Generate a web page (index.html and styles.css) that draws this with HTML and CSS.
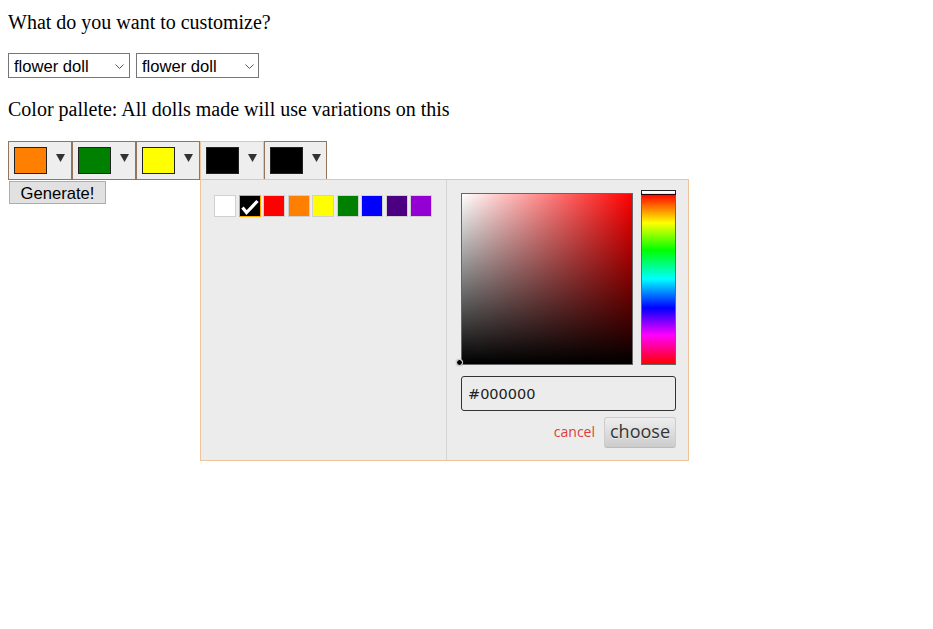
FILE: index.html
```html
<!DOCTYPE html>
<html>
<head>
<meta charset="utf-8">
<title>Customize</title>
<link rel="stylesheet" href="styles.css">
</head>
<body>
<p class="line first">What do you want to customize?</p>
<div class="selects">
  <div class="select w122"><span>flower doll</span><svg class="chev" width="9" height="5" viewBox="0 0 9 5"><polyline points="0.5,0.5 4.5,4.5 8.5,0.5" fill="none" stroke="#555" stroke-width="1"/></svg></div>
  <div class="select w123"><span>flower doll</span><svg class="chev" width="9" height="5" viewBox="0 0 9 5"><polyline points="0.5,0.5 4.5,4.5 8.5,0.5" fill="none" stroke="#555" stroke-width="1"/></svg></div>
</div>
<p class="line second">Color pallete: All dolls made will use variations on this</p>
<div class="replacers">
  <div class="replacer"><div class="preview c-orange"></div><svg class="dd" width="9" height="8" viewBox="0 0 9 8"><polygon points="0,0 9,0 4.5,8" fill="#333"/></svg></div>
  <div class="replacer"><div class="preview c-green"></div><svg class="dd" width="9" height="8" viewBox="0 0 9 8"><polygon points="0,0 9,0 4.5,8" fill="#333"/></svg></div>
  <div class="replacer"><div class="preview c-yellow"></div><svg class="dd" width="9" height="8" viewBox="0 0 9 8"><polygon points="0,0 9,0 4.5,8" fill="#333"/></svg></div>
  <div class="replacer active"><div class="preview c-black"></div><svg class="dd" width="9" height="8" viewBox="0 0 9 8"><polygon points="0,0 9,0 4.5,8" fill="#333"/></svg></div>
  <div class="replacer last"><div class="preview c-black"></div><svg class="dd" width="9" height="8" viewBox="0 0 9 8"><polygon points="0,0 9,0 4.5,8" fill="#333"/></svg></div>
</div>
<button class="generate">Generate!</button>

<div class="popup">
  <div class="palette">
    <div class="thumb c-white"></div>
    <div class="thumb c-black selected"><svg width="20" height="20" viewBox="0 0 20 20"><polyline points="2.5,11.5 6.5,16.5 17.5,5" fill="none" stroke="#fff" stroke-width="3.2" stroke-linejoin="miter" stroke-linecap="butt"/></svg></div>
    <div class="thumb c-red"></div>
    <div class="thumb c-orange"></div>
    <div class="thumb c-yellow"></div>
    <div class="thumb c-green"></div>
    <div class="thumb c-blue"></div>
    <div class="thumb c-indigo"></div>
    <div class="thumb c-violet"></div>
  </div>
  <div class="picker">
    <div class="pick-row">
      <div class="sv"><div class="dragger"></div></div>
      <div class="hue"><div class="slider"></div></div>
    </div>
    <div class="input">#000000</div>
    <div class="actions">
      <span class="cancel">cancel</span>
      <button class="choose">choose</button>
    </div>
  </div>
</div>
</body>
</html>
```
FILE: styles.css
```css
html, body {
  background: #fff;
}
body {
  margin: 8px;
  font-family: "Liberation Serif", "Times New Roman", serif;
  font-size: 20px;
  color: #000;
}
.line {
  margin: 0;
  line-height: 23px;
  height: 23px;
}
.first {
  margin-top: 3px;
}
.second {
  margin-top: 20px;
}
.selects {
  display: flex;
  gap: 6px;
  margin-top: 19px;
}
.select {
  box-sizing: border-box;
  height: 25px;
  border: 1px solid #767676;
  background: #fff;
  display: flex;
  align-items: center;
  justify-content: space-between;
  padding: 0 5px 0 5px;
  font-family: "Liberation Sans", Arial, sans-serif;
  font-size: 16.6px;
  color: #000;
}
.select span {
  line-height: 19px;
  margin-top: 2px;
}
.w122 { width: 122px; }
.w123 { width: 123px; padding-right: 4px; }
.chev {
  display: block;
  margin-top: 1px;
}
.replacers {
  display: flex;
  margin-top: 20px;
}
.replacer {
  box-sizing: border-box;
  width: 64px;
  height: 39px;
  border: 1px solid #91765d;
  background: #eee;
  padding: 5px;
  display: flex;
  align-items: flex-start;
}
.replacer.active {
  border-color: #f0c49b;
}
.replacer.last {
  width: 63px;
}
.preview {
  box-sizing: border-box;
  width: 33px;
  height: 27px;
  border: 1px solid #222;
}
.dd {
  display: block;
  margin-left: 9px;
  margin-top: 7px;
}
.c-orange { background: #ff8000; }
.c-green { background: #008000; }
.c-yellow { background: #ffff00; }
.c-black { background: #000; }
.c-white { background: #fff; }
.c-red { background: #ff0000; }
.c-blue { background: #0000ff; }
.c-indigo { background: #4b0082; }
.c-violet { background: #9400d3; }
.generate {
  display: block;
  box-sizing: border-box;
  width: 97px;
  height: 23px;
  margin: 1px 0 0 1px;
  padding: 1px 0 0 0;
  border: 1px solid #adadad;
  background: #e1e1e1;
  font-family: "Liberation Sans", Arial, sans-serif;
  font-size: 16.6px;
  color: #000;
  line-height: 19px;
}
.popup {
  position: absolute;
  left: 200px;
  top: 179px;
  box-sizing: border-box;
  width: 489px;
  height: 282px;
  border: 1px solid #f0c49b;
  background: #ececec;
  display: flex;
}
.palette {
  box-sizing: border-box;
  width: 246px;
  border-right: 1px solid #d4d4d4;
  padding: 15px 0 0 13px;
  display: flex;
  align-items: flex-start;
  gap: 2.5px;
}
.thumb {
  box-sizing: border-box;
  width: 22px;
  height: 22px;
  border: 1px solid #d0d0d0;
  flex: none;
}
.thumb.selected {
  border-color: orange;
}
.thumb svg {
  display: block;
}
.picker {
  flex: 1;
  box-sizing: border-box;
  padding: 13px 12px 0 14px;
  display: flex;
  flex-direction: column;
}
.pick-row {
  display: flex;
  gap: 8px;
}
.sv {
  position: relative;
  box-sizing: border-box;
  width: 172px;
  height: 172px;
  border: 1px solid #666;
  background:
    linear-gradient(to top, #000, rgba(0,0,0,0)),
    linear-gradient(to right, #fff, rgba(255,255,255,0)),
    #ff0000;
}
.dragger {
  position: absolute;
  left: -6px;
  bottom: -2px;
  width: 5px;
  height: 5px;
  border: 1px solid #fff;
  border-radius: 5px;
  background: #000;
  box-shadow: 0 0 1px #888;
}
.hue {
  position: relative;
  box-sizing: border-box;
  width: 35px;
  height: 172px;
  border: 1px solid #666;
  background: linear-gradient(to bottom, #ff0000 0%, #ffff00 17%, #00ff00 33%, #00ffff 50%, #0000ff 67%, #ff00ff 83%, #ff0000 100%);
}
.slider {
  position: absolute;
  left: -1px;
  right: -1px;
  top: -4px;
  height: 3px;
  border: 1px solid #000;
  background: #fff;
  opacity: 0.85;
}
.input {
  box-sizing: border-box;
  margin-top: 11px;
  width: 215px;
  height: 35px;
  border: 1px solid #333;
  border-radius: 3px;
  padding: 0 6px;
  display: flex;
  align-items: center;
  font-family: "DejaVu Sans", Verdana, sans-serif;
  font-size: 14.5px;
  color: #222;
}
.actions {
  display: flex;
  justify-content: flex-end;
  align-items: center;
  margin-top: 6px;
  width: 215px;
}
.cancel {
  font-family: "Open Sans", sans-serif;
  font-size: 14px;
  color: #d93f3f;
  margin-right: 9px;
  margin-bottom: 3px;
}
.choose {
  box-sizing: border-box;
  width: 72px;
  height: 31px;
  padding: 0 0 4px 0;
  border: 1px solid #ccc;
  border-bottom-color: #bbb;
  border-radius: 3px;
  background: linear-gradient(to bottom, #eeeeee, #cccccc);
  font-family: "Open Sans", sans-serif;
  font-size: 18px;
  line-height: 1;
  color: #333;
  text-shadow: 0 1px 0 #eee;
}
```
